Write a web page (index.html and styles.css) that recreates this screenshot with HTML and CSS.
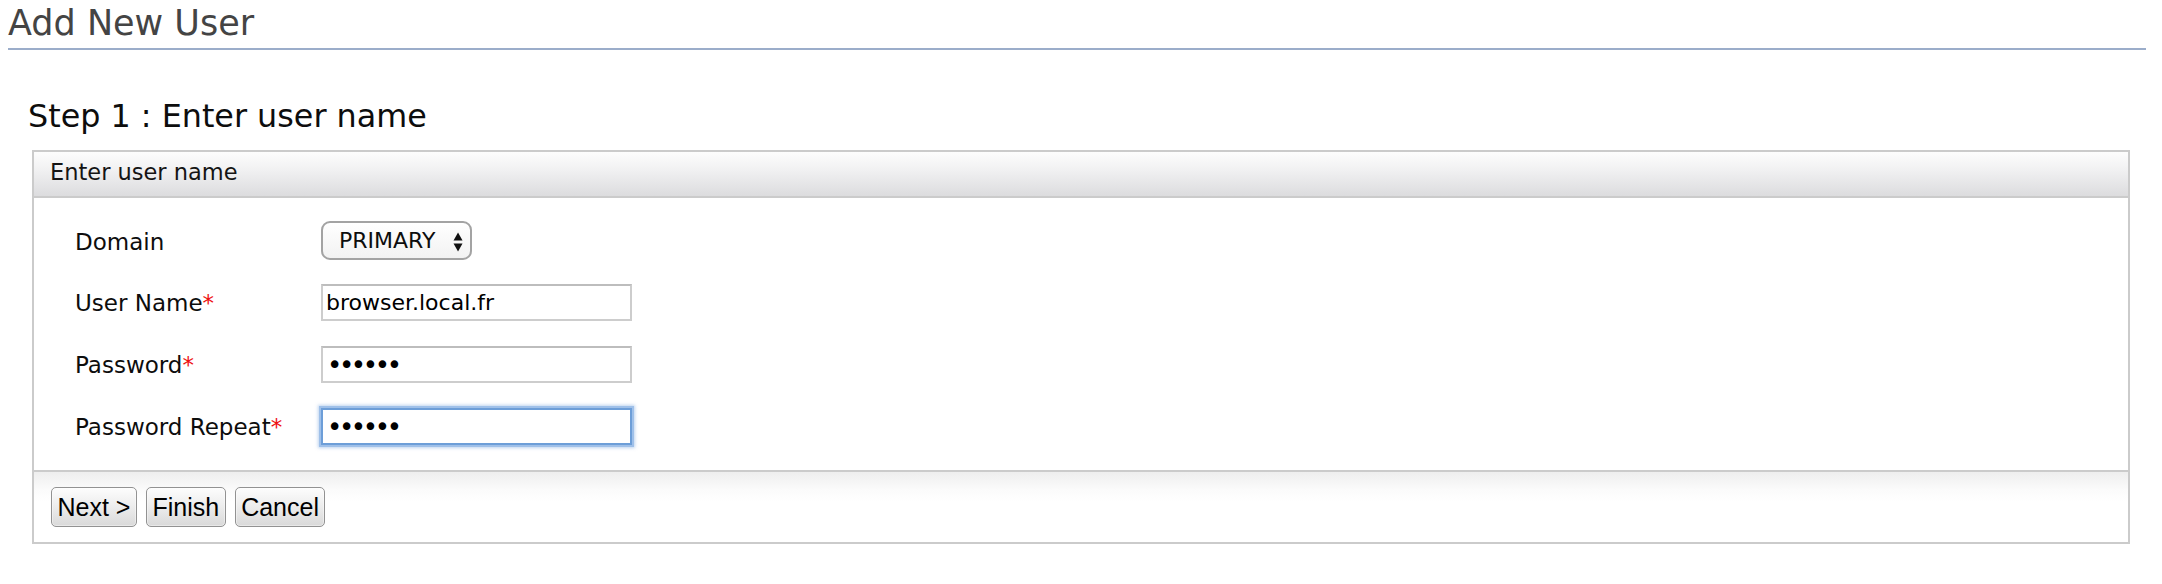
FILE: index.html
```html
<!DOCTYPE html>
<html lang="en">
<head>
<meta charset="utf-8">
<title>Add New User</title>
<link rel="stylesheet" href="styles.css">
</head>
<body>
<h1 class="page-title">Add New User</h1>
<h2 class="step-title">Step 1 : Enter user name</h2>
<div class="panel">
  <div class="panel-header">Enter user name</div>
  <div class="panel-body">
    <label class="field-label field-label-select">Domain</label>
    <div class="select-wrap">
      <select class="select">
        <option>PRIMARY</option>
      </select>
      <svg class="select-arrows" width="10" height="20" viewBox="0 0 10 20" aria-hidden="true">
        <polygon points="0.5,8.5 5,0.5 9.5,8.5" fill="#111"/>
        <polygon points="0.5,11.5 9.5,11.5 5,19.5" fill="#111"/>
      </svg>
    </div>
    <label class="field-label">User Name<span class="req">*</span></label>
    <input class="text-input" type="text" value="browser.local.fr">
    <label class="field-label">Password<span class="req">*</span></label>
    <input class="text-input pass-input" type="password" value="123456">
    <label class="field-label">Password Repeat<span class="req">*</span></label>
    <input class="text-input pass-input focused" type="password" value="123456">
  </div>
  <div class="panel-footer">
    <button class="btn" type="button">Next &gt;</button>
    <button class="btn" type="button">Finish</button>
    <button class="btn" type="button">Cancel</button>
  </div>
</div>
</body>
</html>
```
FILE: styles.css
```css
html, body {
  margin: 0;
  padding: 0;
  background: #ffffff;
}

body {
  font-family: "DejaVu Sans", "Noto Sans", sans-serif;
  color: #111111;
}

.page-title {
  margin: 0 16px 0 8px;
  padding: 3px 0 5px 0;
  font-size: 35px;
  line-height: 40px;
  font-weight: normal;
  color: #444444;
  border-bottom: 2px solid #9badca;
}

.step-title {
  margin: 48px 0 0 28px;
  font-size: 31.8px;
  line-height: 36px;
  font-weight: normal;
  color: #0d0d0d;
}

.panel {
  margin: 16px 32px 0 32px;
  border: 2px solid #cbcbcb;
  background: #ffffff;
}

.panel-header {
  padding: 7px 16px 11px 16px;
  font-size: 22.5px;
  line-height: 26px;
  color: #141414;
  background: linear-gradient(#fdfdfd, #f1f1f2 40%, #dcdcde);
  border-bottom: 2px solid #cbcbcb;
}

.panel-body {
  display: grid;
  grid-template-columns: 246px auto;
  grid-template-rows: 38px 37px 37px 37px;
  row-gap: 25px;
  align-items: start;
  justify-items: start;
  padding: 23px 0 25px 41px;
}

.field-label {
  font-size: 23px;
  line-height: 26px;
  padding-top: 6px;
  color: #0d0d0d;
}

.field-label-select {
  padding-top: 8px;
}

.req {
  color: #ee1111;
}

.select-wrap {
  position: relative;
  width: 151px;
  height: 39px;
}

.select {
  -webkit-appearance: none;
  appearance: none;
  box-sizing: border-box;
  width: 151px;
  height: 39px;
  margin: 0;
  padding: 0 0 0 16px;
  border: 2px solid #a3a3a3;
  border-radius: 9px;
  background: linear-gradient(#ffffff, #f2f2f2);
  font-family: "DejaVu Sans", sans-serif;
  font-size: 22px;
  color: #0d0d0d;
  outline: none;
}

.select-arrows {
  position: absolute;
  right: 9px;
  top: 11px;
  pointer-events: none;
}

.text-input {
  box-sizing: border-box;
  width: 311px;
  height: 37px;
  margin: 0;
  padding: 0 2px 0 3px;
  border: 2px solid #cdcdcd;
  border-top-color: #bdbdbd;
  background: #ffffff;
  font-family: "DejaVu Sans", sans-serif;
  font-size: 22px;
  color: #000000;
  outline: none;
}

.pass-input {
  font-size: 26px;
  letter-spacing: -3.4px;
  padding-left: 4px;
}

.focused {
  border: 2px solid #6d9ed8;
  box-shadow: 0 0 0 2px #9fc0e9, 0 0 3px 3px rgba(125, 170, 225, 0.5);
}

.panel-footer {
  display: flex;
  gap: 9px;
  padding: 15px 17px;
  border-top: 2px solid #cbcbcb;
  background: linear-gradient(#eeeeee 0, #fbfbfb 18px, #ffffff 30px);
}

.btn {
  box-sizing: border-box;
  height: 40px;
  margin: 0;
  padding: 0 5.5px;
  border: 1px solid #929292;
  border-radius: 5px;
  background: linear-gradient(#fdfdfd, #ececec 50%, #d9d9d9);
  font-family: "Liberation Sans", Arial, sans-serif;
  font-size: 25px;
  color: #000000;
  box-shadow: inset 0 0 0 1px rgba(255, 255, 255, 0.4);
}
```
